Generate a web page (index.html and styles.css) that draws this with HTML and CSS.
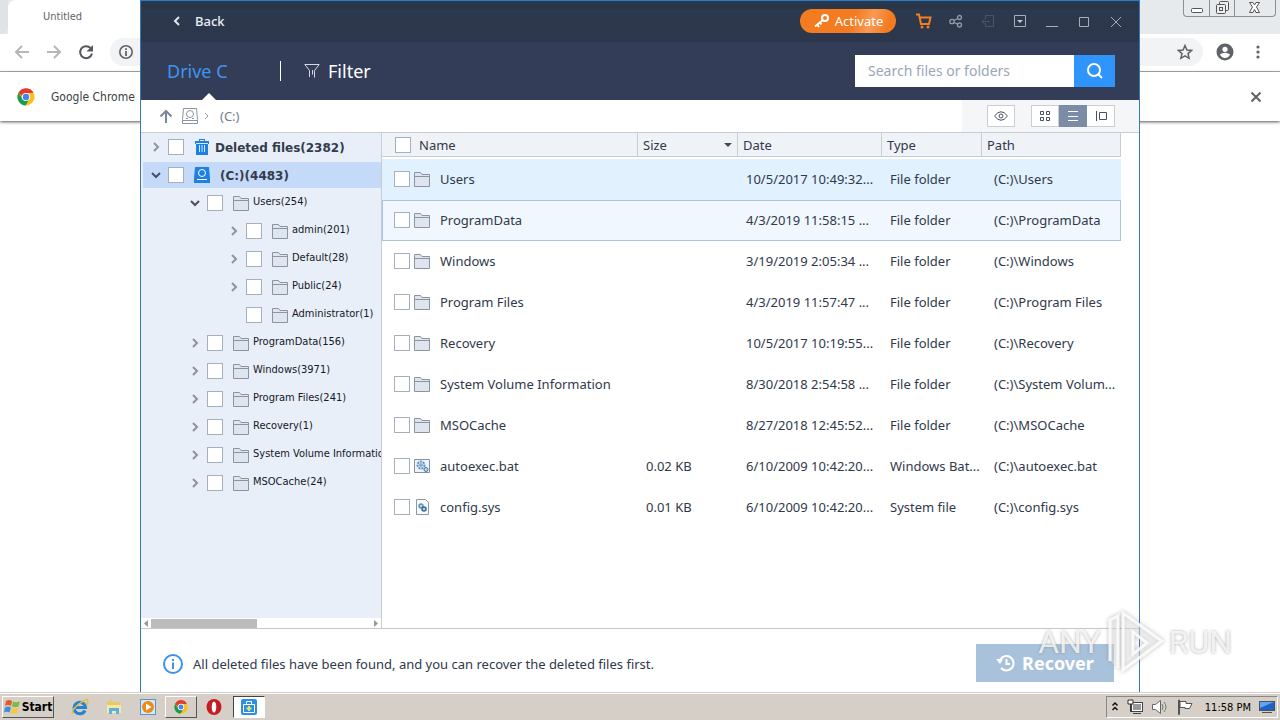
FILE: index.html
```html
<!DOCTYPE html>
<html lang="en">
<head>
<meta charset="utf-8">
<title>Drive C</title>
<link rel="stylesheet" href="styles.css">
</head>
<body>
<svg class="defs" aria-hidden="true">
  <symbol id="folder" viewBox="0 0 16 16"><path d="M.5 15.500V1.500H6.500L8 3.500H15.500V15.500Z" fill="#dfe5ee" stroke="#8b94a3"/><path d="M1 5.500H15" stroke="#8b94a3"/></symbol>
  <symbol id="right" viewBox="0 0 10 10"><path d="M3 1 7 5 3 9" fill="none" stroke="#8e949e" stroke-width="2"/></symbol>
  <symbol id="down" viewBox="0 0 10 10"><path d="M1 3 5 7 9 3" fill="none" stroke="#465065" stroke-width="2"/></symbol>
  <symbol id="chrome" viewBox="0 0 18 18"><circle cx="9" cy="9" r="8.500" fill="#fbc116"/><path d="M9 9 1.600 4.700A8.500 8.500 0 0 1 16.400 4.700L9 5Z" fill="#e33b2e"/><path d="M1.600 4.700A8.500 8.500 0 0 0 8.600 17.500L12.400 11 9 9 5.500 11Z" fill="#1a9b50"/><path d="M1.600 4.700A8.500 8.500 0 0 1 16.400 4.700H9L5 8Z" fill="#e33b2e"/><circle cx="9" cy="9" r="4.100" fill="#fff"/><circle cx="9" cy="9" r="3.200" fill="#4285f4"/></symbol>
</svg>
<div class="desktop">
  <div class="stage">
    <section class="browser" aria-label="Browser">
      <div class="strip">
        <div class="tab-prev"></div>
        <div class="tab">Untitled</div>
        <div class="strip-rest"></div>
        <div class="win-btns">
          <button aria-label="Minimize"><svg width="25" height="17"><rect x="7.500" y="8.500" width="11" height="4" rx="1" fill="#fff" stroke="#555"/></svg></button>
          <button aria-label="Restore"><svg width="24" height="17" fill="#eee" stroke="#555"><rect x="9.500" y="1.500" width="9" height="9" rx="1"/><rect x="6.500" y="4.500" width="9" height="9" rx="1"/><rect x="9.500" y="7.500" width="3" height="3"/></svg></button>
          <button aria-label="Close"><svg width="40" height="17"><path d="M14.500 2.500H18L19.500 5 21 2.500H24.500L21.500 7 24.500 12.500H21L19.500 9.500 18 12.500H14.500L17.500 7Z" fill="#fff" stroke="#555"/></svg></button>
        </div>
      </div>
      <div class="toolbar">
        <button aria-label="Back"><svg width="16" height="16" fill="none" stroke="#b4b6b9" stroke-width="2"><path d="M15 8H2M8 2 2 8 8 14"/></svg></button>
        <button aria-label="Forward"><svg width="16" height="16" fill="none" stroke="#b4b6b9" stroke-width="2"><path d="M1 8H14M8 2 14 8 8 14"/></svg></button>
        <button aria-label="Reload"><svg width="16" height="16"><path d="M12.500 4A6 6 0 1 0 14 9.500" fill="none" stroke="#55585c" stroke-width="2"/><path d="M15 1V7.500H8.500Z" fill="#55585c"/></svg></button>
        <div class="omnibox">
          <svg width="16" height="16"><circle cx="8" cy="8" r="6.200" fill="none" stroke="#5f6368" stroke-width="1.600"/><path d="M8 7V12M8 4.200V6" stroke="#5f6368" stroke-width="1.800"/></svg>
          <svg width="16" height="16"><path d="M8 1.500 9.900 6 14.600 6.400 11 9.600 12.100 14.300 8 11.800 3.900 14.300 5 9.600 1.400 6.400 6.100 6Z" fill="none" stroke="#5f6368" stroke-width="1.500"/></svg>
        </div>
        <button aria-label="Profile"><svg width="18" height="18"><circle cx="9" cy="9" r="8.500" fill="#5f6368"/><circle cx="9" cy="6.300" r="2.600" fill="#fff"/><path d="M3.800 11.500Q9 8 14.200 11.500 12 15 9 15 6 15 3.800 11.500Z" fill="#fff"/></svg></button>
        <button aria-label="Menu"><svg width="16" height="18" fill="#5f6368"><circle cx="8" cy="4" r="1.600"/><circle cx="8" cy="9" r="1.600"/><circle cx="8" cy="14" r="1.600"/></svg></button>
      </div>
      <div class="infobar">
        <svg width="18" height="18"><use href="#chrome"/></svg>
        <span>Google Chrome</span>
        <button aria-label="Dismiss"><svg width="12" height="12"><path d="M1.500 1.500 10.500 10.500M10.500 1.500 1.500 10.500" stroke="#606367" stroke-width="2"/></svg></button>
      </div>
    </section>

    <main class="app">
      <header class="titlebar">
        <button class="back"><svg width="10" height="12"><path d="M7 2 3 6 7 10" fill="none" stroke="#dfe6ee" stroke-width="2"/></svg>Back</button>
        <div class="title-actions">
          <button class="activate"><svg width="18" height="16"><circle cx="12" cy="5" r="3" fill="none" stroke="#fff" stroke-width="2"/><path d="M10 7 2 13.500M4 11.500 6 14M7 9.500 8.500 11.500" stroke="#fff" stroke-width="2"/></svg>Activate</button>
          <button aria-label="Buy"><svg width="16" height="16"><path d="M0 1.500H3L5 11H13L14.500 4.500H4" fill="none" stroke="#f57e24" stroke-width="2"/><circle cx="6" cy="14" r="1.500" fill="#f57e24"/><circle cx="12" cy="14" r="1.500" fill="#f57e24"/></svg></button>
          <button aria-label="Share"><svg width="16" height="16" fill="none" stroke="#939baa" stroke-width="1.300"><circle cx="4" cy="8.500" r="2.200"/><circle cx="11.500" cy="4.500" r="2"/><circle cx="11.500" cy="12" r="2"/><path d="M6 7.500 9.700 5.500M6 9.500 9.700 11.200"/></svg></button>
          <button aria-label="Export"><svg width="16" height="16" fill="none" stroke="#4b5467"><path d="M5.500 6V2.500H13.500V13.500H5.500V10M10 8.500H2M5 5.500 2 8.500 5 11.500"/></svg></button>
          <button aria-label="Options"><svg width="16" height="16"><path d="M2.500 2.500H13.500V13.500H2.500Z" fill="none" stroke="#a7aebb"/><path d="M5 7H11L8 10Z" fill="#c5cad2"/></svg></button>
          <button aria-label="Minimize"><svg width="16" height="16"><path d="M2 13.500H14" stroke="#a7aebb"/></svg></button>
          <button aria-label="Maximize"><svg width="16" height="16"><path d="M3.500 4.500H12.500V13.500H3.500Z" fill="none" stroke="#a7aebb"/></svg></button>
          <button aria-label="Close"><svg width="16" height="16"><path d="M3 4 13 14M13 4 3 14" stroke="#a7aebb"/></svg></button>
        </div>
      </header>

      <div class="tabs">
        <button class="drive">Drive C</button>
        <button class="filter"><svg width="16" height="16" fill="none" stroke="#d5dae4"><path d="M5.500 14V7.500L.8 1.500H15.200L10.500 7.500V14.500M8.500 7V11.500"/></svg>Filter</button>
        <form class="search">
          <input type="text" placeholder="Search files or folders" aria-label="Search files or folders">
          <button type="button" aria-label="Search"><svg width="20" height="20"><circle cx="9" cy="9" r="6" fill="none" stroke="#fff" stroke-width="2"/><path d="M13.500 13.500 17 17" stroke="#fff" stroke-width="2"/></svg></button>
        </form>
      </div>

      <nav class="crumbs" aria-label="Path">
        <button aria-label="Up"><svg width="16" height="16"><path d="M8 15V3M2.500 8.500 8 3 13.500 8.500" fill="none" stroke="#7b869d" stroke-width="2"/></svg></button>
        <svg width="16" height="16" fill="none" stroke="#8c93a2"><path d="M1.500.5H14.500L15.500 11.500V15.500H.5V11.500ZM.5 12.500H15.500"/><circle cx="8" cy="6" r="3.500"/><path d="M4 10.500H6M10 10.500H12"/></svg>
        <svg width="6" height="8"><path d="M1 1 4 4 1 7" fill="none" stroke="#9a9a9a"/></svg>
        <a href="#">(C:)</a>
        <div class="views">
          <button class="eye" aria-label="Preview"><svg width="16" height="16" fill="none" stroke="#475063"><path d="M1.500 8Q8-.5 14.500 8 8 16.500 1.500 8Z"/><circle cx="8" cy="8" r="2"/></svg></button>
          <div class="group">
            <button aria-label="Icons"><svg width="16" height="16" fill="none" stroke="#475063"><path d="M3.500 3.500H6.500V6.500H3.500ZM9.500 3.500H12.500V6.500H9.500ZM3.500 9.500H6.500V12.500H3.500ZM9.500 9.500H12.500V12.500H9.500Z"/></svg></button>
            <button class="on" aria-label="List"><svg width="16" height="16"><path d="M3 3.500H13M3 8.500H13M3 12.500H13" stroke="#fff"/></svg></button>
            <button aria-label="Details"><svg width="16" height="16" fill="none" stroke="#475063"><path d="M3.500 3V13M6.500 4.500H13.500V11.500H6.500Z"/></svg></button>
          </div>
        </div>
      </nav>

      <div class="content">
        <aside class="side">
          <ul class="tree">
            <li class="root"><div class="node"><button aria-label="Expand"><svg width="10" height="10"><use href="#right"/></svg></button><input type="checkbox" id="t1"><svg width="16" height="16"><path d="M1 2H5V0H11V2H15V5H14V16H2V5H1Z" fill="#1e80e2"/><path d="M5.500 6V13M8 6V13M10.500 6V13M6 1.500H10M2 4.500H14" stroke="#d7eafc"/></svg><label for="t1">Deleted files(2382)</label></div></li>
            <li class="root"><div class="node selected"><button aria-label="Collapse"><svg width="10" height="10"><use href="#down"/></svg></button><input type="checkbox" id="t2"><svg width="16" height="16"><path d="M1 0H15L16 11V16H0V11Z" fill="#1e80e2"/><circle cx="8" cy="6" r="3.500" fill="none" stroke="#fff"/><path d="M3 12.500H13" stroke="#fff"/></svg><label class="drive-label" for="t2">(C:)(4483)</label></div>
              <ul>
                <li><div class="node"><button aria-label="Collapse"><svg width="10" height="10"><use href="#down"/></svg></button><input type="checkbox" id="t3"><svg width="16" height="16"><use href="#folder"/></svg><label for="t3">Users(254)</label></div>
                  <ul>
                    <li><div class="node"><button aria-label="Expand"><svg width="10" height="10"><use href="#right"/></svg></button><input type="checkbox" id="t4"><svg width="16" height="16"><use href="#folder"/></svg><label for="t4">admin(201)</label></div></li>
                    <li><div class="node"><button aria-label="Expand"><svg width="10" height="10"><use href="#right"/></svg></button><input type="checkbox" id="t5"><svg width="16" height="16"><use href="#folder"/></svg><label for="t5">Default(28)</label></div></li>
                    <li><div class="node"><button aria-label="Expand"><svg width="10" height="10"><use href="#right"/></svg></button><input type="checkbox" id="t6"><svg width="16" height="16"><use href="#folder"/></svg><label for="t6">Public(24)</label></div></li>
                    <li><div class="node"><span class="no-toggle"></span><input type="checkbox" id="t7"><svg width="16" height="16"><use href="#folder"/></svg><label for="t7">Administrator(1)</label></div></li>
                  </ul>
                </li>
                <li><div class="node"><button aria-label="Expand"><svg width="10" height="10"><use href="#right"/></svg></button><input type="checkbox" id="t8"><svg width="16" height="16"><use href="#folder"/></svg><label for="t8">ProgramData(156)</label></div></li>
                <li><div class="node"><button aria-label="Expand"><svg width="10" height="10"><use href="#right"/></svg></button><input type="checkbox" id="t9"><svg width="16" height="16"><use href="#folder"/></svg><label for="t9">Windows(3971)</label></div></li>
                <li><div class="node"><button aria-label="Expand"><svg width="10" height="10"><use href="#right"/></svg></button><input type="checkbox" id="t10"><svg width="16" height="16"><use href="#folder"/></svg><label for="t10">Program Files(241)</label></div></li>
                <li><div class="node"><button aria-label="Expand"><svg width="10" height="10"><use href="#right"/></svg></button><input type="checkbox" id="t11"><svg width="16" height="16"><use href="#folder"/></svg><label for="t11">Recovery(1)</label></div></li>
                <li><div class="node"><button aria-label="Expand"><svg width="10" height="10"><use href="#right"/></svg></button><input type="checkbox" id="t12"><svg width="16" height="16"><use href="#folder"/></svg><label for="t12">System Volume Information</label></div></li>
                <li><div class="node"><button aria-label="Expand"><svg width="10" height="10"><use href="#right"/></svg></button><input type="checkbox" id="t13"><svg width="16" height="16"><use href="#folder"/></svg><label for="t13">MSOCache(24)</label></div></li>
              </ul>
            </li>
          </ul>
          <div class="hscroll">
            <svg width="10" height="9"><path d="M7 1V8L3 4.500Z" fill="#999"/></svg>
            <div class="track"><div class="thumb"></div></div>
            <svg width="10" height="9"><path d="M3 1V8L7 4.500Z" fill="#999"/></svg>
          </div>
        </aside>

        <div class="files">
          <table>
            <colgroup><col><col class="c-size"><col class="c-date"><col class="c-type"><col class="c-path"></colgroup>
            <thead><tr>
              <th><div class="name head-name"><input type="checkbox" id="all"><label for="all">Name</label></div></th>
              <th><div class="sort">Size<svg width="8" height="4"><path d="M0 0H8L4 4Z" fill="#444c5a"/></svg></div></th>
              <th>Date</th><th>Type</th><th>Path</th>
            </tr></thead>
            <tbody>
              <tr class="hot"><td><div class="name"><input type="checkbox" id="f1"><svg width="16" height="16"><use href="#folder"/></svg><label for="f1">Users</label></div></td><td></td><td>10/5/2017 10:49:32...</td><td>File folder</td><td>(C:)\Users</td></tr>
              <tr class="focus"><td><div class="name"><input type="checkbox" id="f2"><svg width="16" height="16"><use href="#folder"/></svg><label for="f2">ProgramData</label></div></td><td></td><td>4/3/2019 11:58:15 ...</td><td>File folder</td><td>(C:)\ProgramData</td></tr>
              <tr><td><div class="name"><input type="checkbox" id="f3"><svg width="16" height="16"><use href="#folder"/></svg><label for="f3">Windows</label></div></td><td></td><td>3/19/2019 2:05:34 ...</td><td>File folder</td><td>(C:)\Windows</td></tr>
              <tr><td><div class="name"><input type="checkbox" id="f4"><svg width="16" height="16"><use href="#folder"/></svg><label for="f4">Program Files</label></div></td><td></td><td>4/3/2019 11:57:47 ...</td><td>File folder</td><td>(C:)\Program Files</td></tr>
              <tr><td><div class="name"><input type="checkbox" id="f5"><svg width="16" height="16"><use href="#folder"/></svg><label for="f5">Recovery</label></div></td><td></td><td>10/5/2017 10:19:55...</td><td>File folder</td><td>(C:)\Recovery</td></tr>
              <tr><td><div class="name"><input type="checkbox" id="f6"><svg width="16" height="16"><use href="#folder"/></svg><label for="f6">System Volume Information</label></div></td><td></td><td>8/30/2018 2:54:58 ...</td><td>File folder</td><td>(C:)\System Volum...</td></tr>
              <tr><td><div class="name"><input type="checkbox" id="f7"><svg width="16" height="16"><use href="#folder"/></svg><label for="f7">MSOCache</label></div></td><td></td><td>8/27/2018 12:45:52...</td><td>File folder</td><td>(C:)\MSOCache</td></tr>
              <tr><td><div class="name"><input type="checkbox" id="f8"><svg width="16" height="16"><path d="M.5 1.500H15.500V14.500H.5Z" fill="#edf3f8" stroke="#8793a3"/><circle cx="7" cy="7" r="3.500" fill="#cfe4f3" stroke="#5d93bd" stroke-width="2" stroke-dasharray="2 1"/><circle cx="7" cy="7" r="1.200" fill="#fff" stroke="#4b84b3"/><circle cx="12" cy="11.500" r="2" fill="#b8d5ea" stroke="#4477a4"/></svg><label for="f8">autoexec.bat</label></div></td><td>0.02 KB</td><td>6/10/2009 10:42:20...</td><td>Windows Bat...</td><td>(C:)\autoexec.bat</td></tr>
              <tr><td><div class="name"><input type="checkbox" id="f9"><svg width="16" height="16"><path d="M2.500.5H11.500L14.500 3.500V15.500H2.500Z" fill="#f6f8fa" stroke="#8d97a5"/><circle cx="7" cy="7" r="2" fill="#b8d5ea" stroke="#5d93bd" stroke-width="1.500"/><circle cx="10" cy="10" r="2" fill="#b8d5ea" stroke="#386b9a" stroke-width="1.500"/></svg><label for="f9">config.sys</label></div></td><td>0.01 KB</td><td>6/10/2009 10:42:20...</td><td>System file</td><td>(C:)\config.sys</td></tr>
            </tbody>
          </table>
        </div>
      </div>

      <footer class="foot">
        <svg width="20" height="20"><circle cx="10" cy="10" r="9" fill="none" stroke="#3c90f0" stroke-width="2"/><path d="M10 8.500V15M10 5V7" stroke="#3c90f0" stroke-width="2"/></svg>
        <p>All deleted files have been found, and you can recover the deleted files first.</p>
        <button class="recover"><svg width="20" height="20"><path d="M4 7A7.200 7.200 0 1 1 5 15" fill="none" stroke="#fff" stroke-width="2"/><path d="M0 6H7L4 11Z" fill="#fff"/><path d="M10.500 6V11H14" fill="none" stroke="#fff" stroke-width="2"/></svg>Recover</button>
      </footer>
    </main>

    <div class="watermark" aria-hidden="true"><span>ANY</span><svg width="60" height="64" fill="rgba(255,255,255,.35)" stroke="#fff" stroke-width="3" stroke-opacity=".85"><path d="M5 51V10L13 6V58"/><path d="M18 3 57 31 18 60ZM28 22V44L42 33Z" fill-rule="evenodd"/></svg><span>RUN</span></div>
  </div>

  <div class="taskbar">
    <button class="start"><svg width="17" height="18"><path d="M2 3Q5 1 8 3L7 8Q4 6 1 8Z" fill="#e9572b"/><path d="M9 3.500Q12 5 16 3.500L14.500 8.500Q11 10 8 8.500Z" fill="#7fbb42"/><path d="M1 9.500Q4 7.500 7 9.500L5.500 14.500Q3 13 0 14.500Z" fill="#3d8fd8"/><path d="M8 10Q11 11.500 14.500 10L13 15Q10 16 6.500 15Z" fill="#f7c63a"/></svg>Start</button>
    <button class="quick" aria-label="Internet Explorer"><svg width="18" height="18"><path d="M14 12.500A5.700 5.700 0 1 1 14.500 9.500H5" fill="none" stroke="#2583d3" stroke-width="3"/><path d="M2 16Q-1 13 8 6T16.500 3Q17.500 4 15.500 7" fill="none" stroke="#e8bc3c" stroke-width="1.500"/></svg></button>
    <button class="quick" aria-label="Explorer"><svg width="18" height="18"><path d="M2 4 7 2 8 4H15V14H2Z" fill="#e7ca68"/><path d="M2 7H16V15H2Z" fill="#f7e7a2"/><path d="M4 16V10H14V16H11V13H7V16Z" fill="#5cb0dd"/></svg></button>
    <button class="quick" aria-label="Media Player"><svg width="18" height="18"><rect x="1.500" y="1.500" width="15" height="15" fill="#d4e8f7" stroke="#4f98d2"/><circle cx="9" cy="9" r="6" fill="#f08a17"/><path d="M7 5.500V12.500L12.500 9Z" fill="#fff"/></svg></button>
    <button class="quick raised" aria-label="Chrome"><svg width="14" height="14" viewBox="0 0 18 18"><use href="#chrome" width="18" height="18"/></svg></button>
    <button class="quick" aria-label="Opera"><svg width="18" height="18"><ellipse cx="9" cy="9" rx="7.500" ry="8" fill="#c61d22"/><ellipse cx="9" cy="9" rx="2.300" ry="5.500" fill="#fff"/></svg></button>
    <button class="quick pressed" aria-label="Data recovery"><svg width="16" height="16"><rect width="16" height="16" rx="2" fill="#2d8ee8"/><path d="M5.500 5V2.500H10.500V5M2.500 5.500H13.500V13.500H2.500Z" fill="none" stroke="#fff"/><path d="M8 7V12M5.500 9.500H10.500" stroke="#e8e45a" stroke-width="2"/></svg></button>
    <div class="tray">
      <svg width="8" height="12" fill="none" stroke="#111" stroke-width="1.500"><path d="M1.500 4.500 4 2 6.500 4.500M1.500 9 4 6.500 6.500 9"/></svg>
      <svg width="16" height="16"><rect x="4.500" y="3.500" width="11" height="9" fill="#fff" stroke="#444"/><rect x="6" y="5" width="8" height="6" fill="#999"/><path d="M6 14.500H14" stroke="#444"/><path d="M1 1H6V5H1Z" fill="#fff" stroke="#333"/><path d="M3.500 5V12.500H5" fill="none" stroke="#333"/></svg>
      <svg width="18" height="16"><path d="M1.500 5.500H4.500L9.500 1.500V14.500L4.500 10.500H1.500Z" fill="#fff" stroke="#666"/><path d="M11 5Q13 8 11 11M13 3Q17 8 13 13" fill="none" stroke="#777"/></svg>
      <svg width="16" height="16"><path d="M1.500 1V15.500H2.500V1ZM3 2.500H9V4.500H15L12.500 9.500H8V8.500H3Z" fill="#fff" stroke="#555"/></svg>
      <time>11:58 PM</time>
      <svg width="16" height="14"><rect x=".5" y="1.500" width="15" height="9" fill="#1c62c7" stroke="#4a5362"/><path d="M1 2H15L1 8Z" fill="#65a4e8"/><path d="M3 12.500H13" stroke="#4a5362"/></svg>
    </div>
  </div>
</div>
</body>
</html>
```

FILE: styles.css
```css
* { box-sizing: border-box; }
body { margin: 0; font-family: "Noto Sans", sans-serif; font-size: 13px; color: #30394a; }
button { margin: 0; padding: 0; border: 0; background: none; font: inherit; color: inherit; display: flex; align-items: center; justify-content: center; flex: none; }
svg { display: block; flex: none; }
ul { list-style: none; margin: 0; padding: 0; }
p { margin: 0; }
input[type="checkbox"] { appearance: none; flex: none; width: 16px; height: 16px; margin: 0; background: #fff; border: 1px solid #a5b0bf; }
.defs { position: absolute; width: 0; height: 0; }
.desktop { display: flex; flex-direction: column; height: 100vh; overflow: hidden; background: #fff; }
.stage { position: relative; flex: 1; min-height: 0; }

/* Browser behind the application */
.browser { font-family: "DejaVu Sans Condensed", sans-serif; color: #3c4043; }
.strip { display: flex; height: 34px; background: #e7eaed; }
.tab-prev { width: 8px; background: #dfe3e6; border-bottom-right-radius: 8px; }
.tab { width: 240px; padding: 0 35px; background: #fff; border-top-left-radius: 8px; font-size: 11px; line-height: 34px; color: #5f6368; }
.strip-rest { flex: 1; }
.win-btns { display: flex; height: 17px; margin-right: 4px; border: 1px solid #8d9092; border-top: 0; border-radius: 0 0 4px 4px; }
.win-btns button + button { border-left: 1px solid #8d9092; }
.toolbar { display: flex; align-items: center; gap: 16px; height: 38px; padding: 0 14px 2px; border-bottom: 1px solid #a9abad; }
.omnibox { display: flex; flex: 1; align-items: center; justify-content: space-between; height: 28px; margin-right: -3px; padding: 0 10px 0 8px; border-radius: 14px; background: #f1f3f4; }
.infobar { display: flex; align-items: center; height: 49px; padding: 0 18px 0 17px; gap: 16px; box-shadow: 0 1px 3px #555; font-size: 12px; }
.infobar button { margin-left: auto; }

/* Application window */
.app { position: absolute; inset: 0 140px 0 140px; display: flex; flex-direction: column; background: #fff; border: 1px solid #3a78ae; border-bottom: 0; }
.titlebar { display: flex; align-items: center; justify-content: space-between; height: 41px; padding: 0 15px 2px 31px; background: linear-gradient(#1f3d60 0, #2c3443 5px, #2b3a50 10px, #2d384b 20px, #2c374e 41px); color: #e9eef5; }
.back { gap: 13px; font-weight: 500; }
.title-actions { display: flex; align-items: center; gap: 16px; }
.activate { gap: 4px; height: 24px; width: 96px; margin-right: 4px; border-radius: 12px; background: linear-gradient(110deg, #f47b20 55%, #f99a55 72%, #f47b20 90%); color: #fff; }
.tabs { display: flex; align-items: center; height: 58px; padding: 0 24px; background: #343d58; }
.drive { position: relative; align-self: stretch; width: 90px; justify-content: flex-start; padding-left: 2px; font-size: 18px; color: #3f95ee; }
.drive::after { content: ""; position: absolute; left: 37px; bottom: 0; border: 7px solid transparent; border-top: 0; border-bottom-color: #fff; }
.filter { gap: 8px; margin-left: 25px; padding-left: 23px; border-left: 1px solid #fff; font-size: 18px; line-height: 20px; color: #fff; }
.search { display: flex; height: 32px; margin-left: auto; }
.search input { width: 219px; padding: 0 13px 2px; border: 0; background: #fff; font: inherit; font-size: 14px; }
.search input::placeholder { color: #9ba6b8; }
.search button { width: 41px; background: #2f94fb; }
.crumbs { display: flex; align-items: center; height: 33px; padding-left: 17px; border-bottom: 1px solid #c8cdd3; color: #727d90; }
.crumbs > svg { margin-left: 8px; }
.crumbs > svg + svg { margin-left: 6px; }
.crumbs a { margin-left: 10px; color: inherit; text-decoration: none; }
.views { display: flex; align-items: center; gap: 16px; height: 32px; margin-left: auto; padding: 0 24px 0 25px; background: #f5f6f7; }
.views button { width: 28px; height: 22px; background: #fff; border: 1px solid #c9cdd4; }
.group { display: flex; }
.group button + button { border-left: 0; }
.views .on { background: #7c8ba6; border-color: #7c8ba6; }

.content { display: flex; flex: 1; min-height: 0; border-bottom: 1px solid #c4c7cb; }
.side { display: flex; flex-direction: column; flex: none; width: 241px; overflow: hidden; background: #e9eff8; border-right: 1px solid #c8cdd5; }
.tree { flex: 1; min-height: 0; padding-left: 2px; overflow: hidden; font-family: "DejaVu Sans Condensed", sans-serif; font-size: 11px; color: #14181f; }
.tree ul { padding-left: 39px; }
.tree ul label { padding-bottom: 4px; margin-left: 4px; }
.node { display: flex; align-items: center; height: 28px; padding-left: 8px; white-space: nowrap; }
.node input { margin-left: 7px; }
.node > svg { margin-left: 10px; }
.no-toggle { width: 10px; }
.root > .node { font-family: "DejaVu Sans", sans-serif; font-weight: bold; font-size: 12px; color: #333c4c; }
.root > .node label { margin-left: 5px; padding-top: 2px; }
.root > .node .drive-label { margin-left: 10px; }
.selected { padding: 1px 0; background: #c4daf8 content-box; }
.selected button { margin-left: 8px; }
.node.selected { padding: 1px 0; }
.hscroll { display: flex; height: 10px; background: #fff; align-items: center; }
.track { flex: 1; }
.thumb { width: 48%; height: 9px; background: #bcbcbc; }

.files { flex: 1; min-width: 0; padding-right: 18px; }
table { width: 100%; table-layout: fixed; border-collapse: separate; border-spacing: 0; }
.c-size, .c-type { width: 100px; }
.c-date { width: 144px; }
.c-path { width: 139px; }
th { height: 24px; padding: 0 0 0 5px; text-align: left; font-weight: normal; background: #eff2f6; border-right: 1px solid #c8cdd3; border-bottom: 1px solid #c8cdd3; }
td { height: 41px; padding: 0 0 2px 8px; white-space: nowrap; border: 0 solid #a9c6e0; }
td:last-child { padding-left: 12px; }
th:first-child, td:first-child { padding-left: 12px; }
tbody::before { content: ""; display: block; height: 2px; }
.name { display: flex; align-items: center; gap: 4px; }
.name label { margin-left: 6px; }
.head-name { gap: 2px; padding-left: 1px; }
.sort { display: flex; align-items: center; justify-content: space-between; padding-right: 5px; }
.hot td { background: #e1f1fe; }
.focus td { background: #f1f7fe; border-width: 1px 0; }
.focus td:first-child { border-left-width: 1px; padding-left: 11px; }
.focus td:last-child { border-right-width: 1px; }

.foot { display: flex; align-items: center; height: 63px; padding: 6px 25px 0 22px; }
.foot p { margin-left: 10px; }
.recover { gap: 6px; width: 138px; height: 38px; margin: 0 0 2px auto; background: #a9c2db; color: #fff; font-size: 18px; font-weight: bold; }

.watermark { position: absolute; right: 48px; bottom: 18px; display: flex; align-items: center; gap: 4px; font-family: Roboto, sans-serif; font-size: 32px; line-height: 64px; color: rgba(255, 255, 255, .8); text-shadow: 0 0 3px rgba(110, 110, 110, .6); }
.watermark svg { filter: drop-shadow(0 0 2px rgba(110, 110, 110, .55)); }

/* Taskbar */
.taskbar { display: flex; align-items: center; flex: none; height: 28px; padding: 2px 2px 1px; background: #d5cfc7; border-top: 1px solid #d5cfc7; box-shadow: inset 0 1px #fff; font-family: "DejaVu Sans Condensed", sans-serif; font-size: 11px; color: #000; }
.start { width: 52px; height: 22px; gap: 1px; font-size: 12px; font-weight: bold; border: 1px solid; border-color: #fff #555 #555 #fff; margin-right: 9px; }
.quick { width: 34px; height: 22px; }
.raised { width: 32px; border: 1px solid; border-color: #fff #555 #555 #fff; }
.pressed { width: 32px; margin-left: 2px; background: #fff; border: 1px solid; border-color: #444 #fff #fff #444; }
.tray { display: flex; align-items: center; gap: 8px; height: 22px; margin-left: auto; padding: 0 2px 0 4px; border: 1px solid; border-color: #888 #fff #fff #888; }
.tray time { margin-left: 4px; }
```
